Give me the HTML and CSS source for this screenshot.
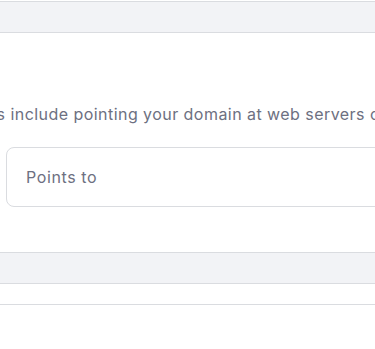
FILE: index.html
```html
<!DOCTYPE html>
<html lang="en">
<head>
    <meta charset="UTF-8">
    <meta name="viewport" content="width=device-width, initial-scale=1.0">
    <title>DNS records</title>
    <link rel="stylesheet" href="styles.css">
</head>
<body>
    <div class="page">
        <div class="panel-head"></div>

        <form class="record-form">
            <p class="hint">Common uses include pointing your domain at web servers or mail servers.</p>
            <div class="fields">
                <input type="text" class="field" name="points-to" placeholder="Points to">
            </div>
        </form>

        <div class="table-head"></div>
        <div class="table-row"></div>
    </div>
</body>
</html>
```

FILE: styles.css
```css
:root {
    --text: #6d7081;
    --line: #dadce0;
    --band: #f2f3f6;
}
body {
    margin: 0;
    background: white;
    font-family: 'Inter', 'Noto Sans', sans-serif;
    letter-spacing: 0.45px;
    color: var(--text);
    overflow: hidden;
}
.page {
    padding-top: 1px;
}
.panel-head,
.table-head {
    height: 30px;
    background: var(--band);
    border-top: 1px solid var(--line);
    border-bottom: 1px solid var(--line);
}
.record-form {
    padding: 69px 0 45px;
}
.hint {
    margin: 0 0 21px;
    font-size: 16px;
    line-height: 24px;
    white-space: nowrap;
    text-indent: -108px;
}
.fields {
    padding-left: 6px;
}
.field {
    display: block;
    box-sizing: border-box;
    width: calc(100% + 60px);
    height: 60px;
    padding: 0 19px;
    border: 1px solid var(--line);
    border-radius: 8px;
    font-family: inherit;
    font-size: 16px;
    letter-spacing: 0.6px;
    color: #36344d;
    outline: none;
}
.field::placeholder {
    color: var(--text);
    opacity: 1;
}
.table-row {
    height: 20px;
    border-bottom: 1px solid var(--line);
}
```
